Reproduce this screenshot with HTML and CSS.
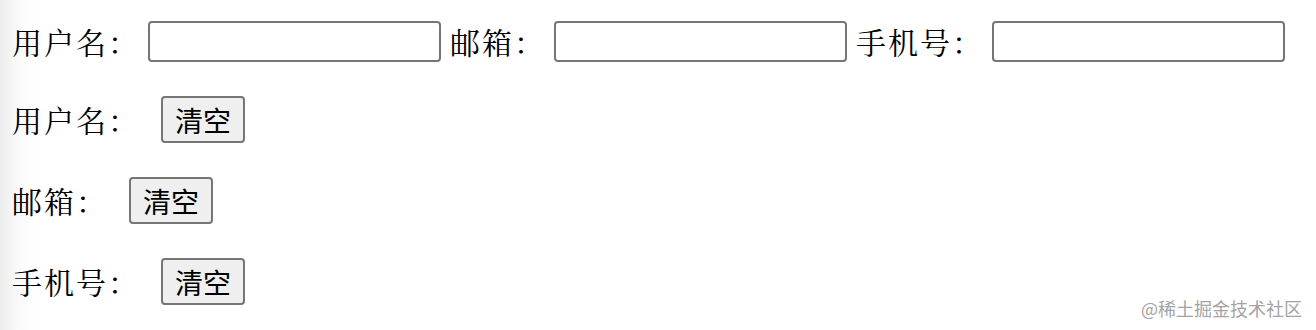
FILE: index.html
```html
<!DOCTYPE html>
<html lang="zh-CN">
<head>
<meta charset="utf-8">
<title>表单</title>
<link rel="stylesheet" href="styles.css">
</head>
<body>
<main class="page">
  <div class="row fields">
    <label class="label">用户名：</label><input class="field" type="text">
    <label class="label next">邮箱：</label><input class="field" type="text">
    <label class="label next">手机号：</label><input class="field" type="text">
  </div>
  <div class="row">
    <span class="label">用户名：</span><button class="btn" type="button">清空</button>
  </div>
  <div class="row">
    <span class="label">邮箱：</span><button class="btn" type="button">清空</button>
  </div>
  <div class="row">
    <span class="label">手机号：</span><button class="btn" type="button">清空</button>
  </div>
</main>
<div class="watermark">@稀土掘金技术社区</div>
</body>
</html>
```

FILE: styles.css
```css
html, body {
  margin: 0;
  padding: 0;
}
body {
  width: 1316px;
  height: 330px;
  position: relative;
  overflow: hidden;
  background: linear-gradient(to right, #ebebeb 0, #f8f8f8 14px, #ffffff 36px);
  color: #000;
  font-family: "Noto Serif CJK SC", "Noto Sans CJK SC", serif;
}
.page {
  display: flex;
  flex-direction: column;
  padding: 18px 0 0 12px;
}
.row {
  display: flex;
  align-items: center;
  height: 47px;
  margin-bottom: 34px;
}
.row.fields {
  margin-bottom: 31px;
}
.label {
  font-size: 30px;
  letter-spacing: 2px;
  line-height: 47px;
  white-space: nowrap;
}
.label.next {
  margin-left: 9px;
}
.field {
  box-sizing: border-box;
  width: 293px;
  height: 41px;
  margin: 0 0 0 8px;
  border: 2px solid #767676;
  border-radius: 4px;
  background: #fff;
  padding: 0 4px;
  font-size: 26px;
}
.btn {
  box-sizing: border-box;
  width: 84px;
  height: 47px;
  margin: 0 0 0 21px;
  padding: 0;
  border: 2px solid #767676;
  border-radius: 4px;
  background: #efefef;
  color: #000;
  font-family: "Noto Sans CJK SC", sans-serif;
  font-size: 28px;
  line-height: 1;
}
.watermark {
  position: absolute;
  right: 14px;
  bottom: 13px;
  font-family: "Noto Sans CJK SC", sans-serif;
  font-size: 18px;
  line-height: 1;
  color: #a3a3a3;
  white-space: nowrap;
}
```
